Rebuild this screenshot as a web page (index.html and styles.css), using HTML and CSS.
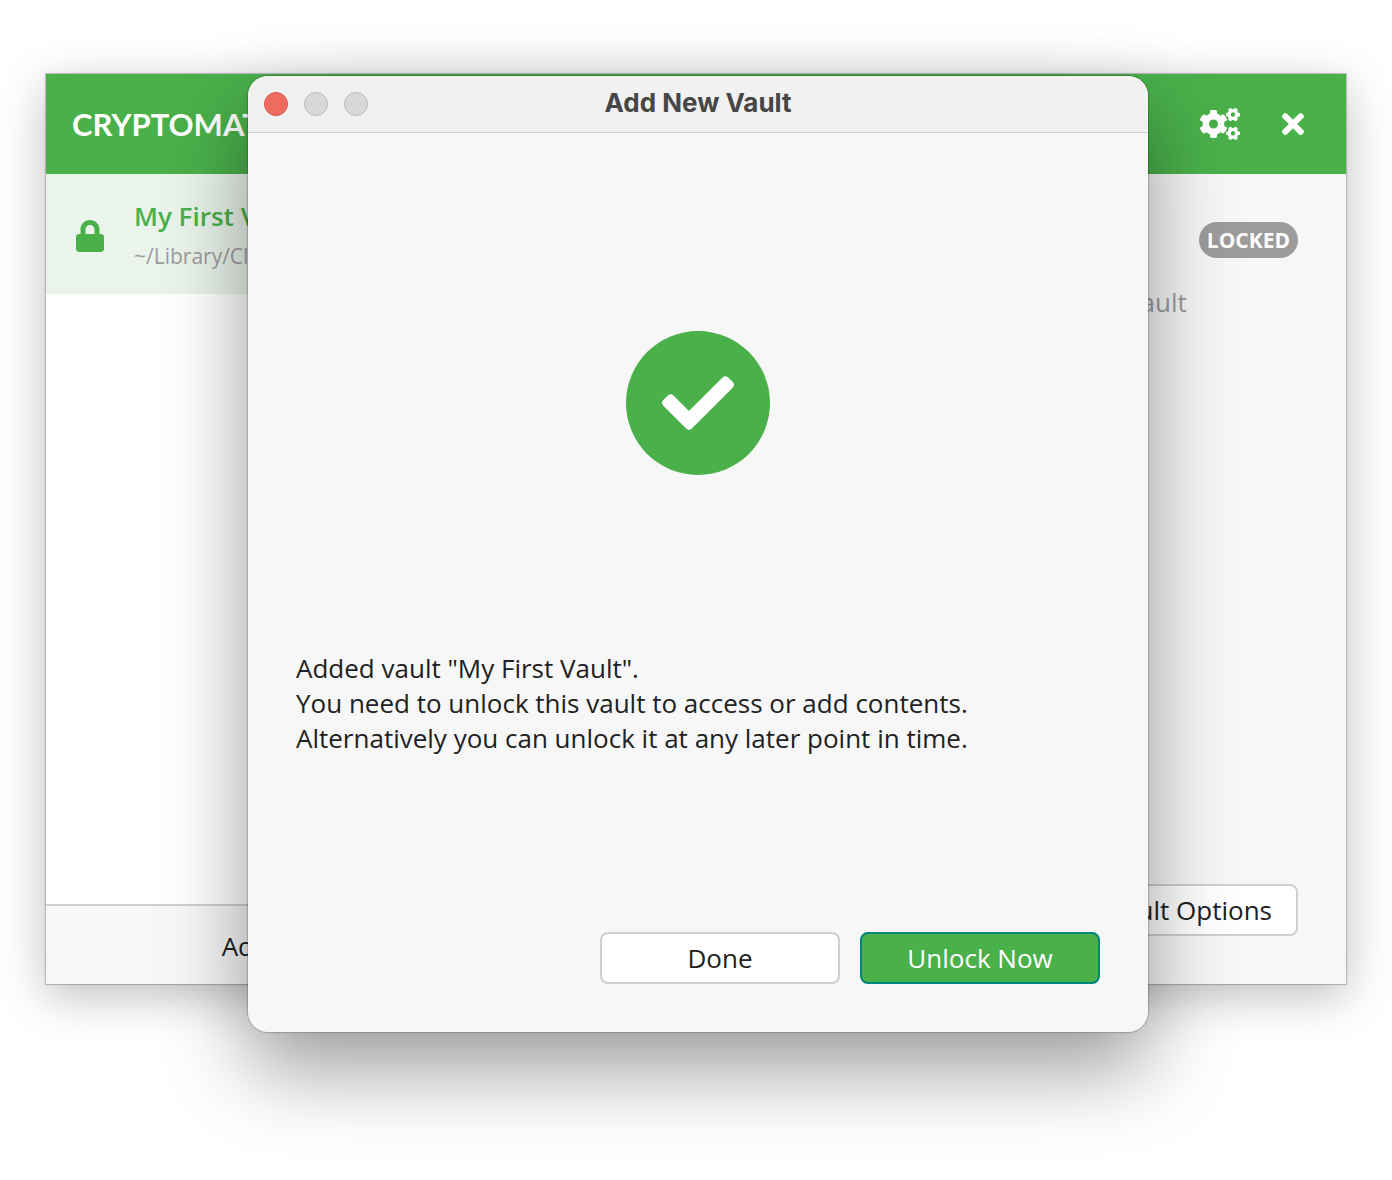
FILE: index.html
```html
<!DOCTYPE html>
<html lang="en">
<head>
<meta charset="utf-8">
<meta name="viewport" content="width=device-width, initial-scale=1">
<title>Cryptomator</title>
<link rel="stylesheet" href="styles.css">
</head>
<body class="desktop">
<main class="window">
  <header class="app-bar">
    <h1 class="brand">CRYPTOMATOR</h1>
    <div class="app-actions">
      <button class="icon-button" type="button" aria-label="Preferences">
        <svg width="40" height="32" viewBox="0 0 640 512" fill="currentColor" aria-hidden="true">
          <defs>
            <path id="small-cog" d="M512.100 191l-8.200 14.300c-3 5.300-9.400 7.500-15.100 5.400-11.800-4.400-22.600-10.700-32.100-18.600-4.600-3.800-5.800-10.500-2.800-15.700l8.200-14.300c-6.900-8-12.300-17.300-15.900-27.400h-16.500c-6 0-11.200-4.300-12.200-10.300-2-12-2.100-24.600 0-37.100 1-6 6.200-10.400 12.200-10.400h16.500c3.600-10.100 9-19.400 15.900-27.400l-8.200-14.300c-3-5.200-1.900-11.900 2.800-15.700 9.500-7.900 20.400-14.200 32.100-18.600 5.700-2.100 12.100.1 15.100 5.400l8.200 14.300c10.500-1.900 21.200-1.900 31.700 0L552 6.300c3-5.300 9.400-7.500 15.100-5.400 11.800 4.400 22.600 10.700 32.100 18.600 4.600 3.800 5.800 10.500 2.800 15.700l-8.200 14.300c6.900 8 12.300 17.300 15.900 27.400h16.500c6 0 11.200 4.300 12.200 10.300 2 12 2.100 24.600 0 37.100-1 6-6.200 10.400-12.200 10.400h-16.500c-3.600 10.100-9 19.400-15.900 27.400l8.200 14.300c3 5.200 1.900 11.900-2.800 15.700-9.500 7.900-20.400 14.200-32.100 18.600-5.700 2.100-12.100-.1-15.100-5.400l-8.200-14.300c-10.400 1.900-21.200 1.900-31.700 0zm-10.500-58.800c38.500 29.600 82.400-14.300 52.800-52.800-38.500-29.700-82.400 14.300-52.800 52.800z"/>
          </defs>
          <use href="#small-cog"/>
          <use href="#small-cog" y="299"/>
          <path d="M386.300 286.100l33.700 16.800c10.100 5.800 14.500 18.100 10.500 29.100-8.900 24.200-26.400 46.400-42.600 65.800-7.400 8.900-20.200 11.100-30.300 5.300l-29.100-16.800c-16 13.700-34.600 24.600-54.900 31.700v33.600c0 11.600-8.300 21.600-19.700 23.600-24.600 4.200-50.400 4.400-75.900 0-11.500-2-20-11.900-20-23.600V418c-20.300-7.200-38.900-18-54.900-31.700L74 403c-10 5.800-22.900 3.600-30.300-5.300-16.200-19.400-33.300-41.600-42.200-65.700-4-10.900.4-23.200 10.500-29.100l33.300-16.800c-3.900-20.900-3.900-42.400 0-63.400L12 205.800c-10.100-5.800-14.600-18.100-10.500-29 8.900-24.200 26-46.400 42.200-65.800 7.400-8.900 20.200-11.100 30.300-5.300l29.100 16.800c16-13.700 34.600-24.600 54.900-31.700V57.100c0-11.500 8.200-21.500 19.600-23.500 24.600-4.200 50.500-4.400 76-.1 11.500 2 20 11.900 20 23.600v33.600c20.300 7.200 38.900 18 54.900 31.700l29.100-16.800c10-5.800 22.900-3.600 30.300 5.300 16.200 19.400 33.200 41.600 42.100 65.800 4 10.900.1 23.200-10 29.100l-33.700 16.800c3.900 21 3.900 42.500 0 63.500zm-117.600 21.100c59.200-77-28.700-164.900-105.700-105.700-59.200 77 28.700 164.900 105.700 105.700z"/>
        </svg>
      </button>
      <button class="icon-button" type="button" aria-label="Close">
        <svg width="22" height="32" viewBox="0 0 352 512" fill="currentColor" aria-hidden="true"><path d="M242.720 256l100.070-100.070c12.280-12.280 12.280-32.190 0-44.480l-22.240-22.240c-12.280-12.280-32.190-12.280-44.480 0L176 189.280 75.930 89.210c-12.280-12.280-32.190-12.280-44.480 0L9.210 111.450c-12.280 12.280-12.280 32.190 0 44.480L109.280 256 9.210 356.070c-12.280 12.280-12.280 32.190 0 44.480l22.240 22.240c12.280 12.280 32.200 12.280 44.480 0L176 322.720l100.070 100.070c12.280 12.280 32.200 12.280 44.480 0l22.240-22.240c12.280-12.280 12.280-32.190 0-44.480L242.720 256z"/></svg>
      </button>
    </div>
  </header>
  <div class="panes">
    <nav class="sidebar">
      <ul class="vault-list">
        <li class="vault">
          <svg class="vault-icon" width="28" height="32" viewBox="0 0 448 512" fill="currentColor" aria-hidden="true"><path d="M400 224h-24v-72C376 68.200 307.800 0 224 0S72 68.200 72 152v72H48c-26.500 0-48 21.500-48 48v192c0 26.500 21.500 48 48 48h352c26.500 0 48-21.500 48-48V272c0-26.500-21.500-48-48-48zm-104 0H152v-72c0-39.700 32.300-72 72-72s72 32.300 72 72v72z"/></svg>
          <div class="vault-text">
            <span class="vault-name">My First Vault</span>
            <span class="vault-path">~/Library/CloudStorage</span>
          </div>
        </li>
      </ul>
      <button class="add-vault" type="button">Add Vault</button>
    </nav>
    <section class="detail">
      <div class="detail-head">
        <span class="badge">LOCKED</span>
        <span class="location">My First Vault</span>
      </div>
      <button class="button options" type="button">Vault Options</button>
    </section>
  </div>
</main>

<section class="dialog" role="dialog" aria-labelledby="dialog-title">
  <header class="title-bar">
    <div class="lights">
      <button class="light light-close" type="button" aria-label="Close window"></button>
      <button class="light" type="button" aria-label="Minimize" disabled></button>
      <button class="light" type="button" aria-label="Zoom" disabled></button>
    </div>
    <h2 class="dialog-title" id="dialog-title">Add New Vault</h2>
  </header>
  <div class="dialog-body">
    <div class="hero">
      <div class="success">
        <svg width="72" height="72" viewBox="0 0 512 512" fill="currentColor" aria-hidden="true"><path d="M173.898 439.404l-166.400-166.400c-9.997-9.997-9.997-26.206 0-36.204l36.203-36.204c9.997-9.998 26.207-9.998 36.204 0L192 312.690 432.095 72.596c9.997-9.997 26.207-9.997 36.204 0l36.203 36.204c9.997 9.997 9.997 26.206 0 36.204l-294.400 294.401c-9.998 9.997-26.207 9.997-36.204-.001z"/></svg>
      </div>
    </div>
    <p class="message">Added vault "My First Vault".<br>You need to unlock this vault to access or add contents.<br>Alternatively you can unlock it at any later point in time.</p>
    <div class="dialog-actions">
      <button class="button" type="button">Done</button>
      <button class="button button-primary" type="button">Unlock Now</button>
    </div>
  </div>
</section>
</body>
</html>
```
FILE: styles.css
```css
:root {
  --green: #4ab04a;
  --surface: #f7f7f7;
  --line: #cfcfcf;
  --ink: #212121;
  --muted: #9c9c9c;
}

* {
  box-sizing: border-box;
}

.desktop {
  position: relative;
  min-height: 100vh;
  margin: 0;
  padding: 74px 46px 196px;
  display: flex;
  overflow: hidden;
  background: #fff;
  color: var(--ink);
  font: 26px/36px "Open Sans", "Noto Sans", sans-serif;
}

button {
  margin: 0;
  padding: 0;
  border: 0;
  background: none;
  color: inherit;
  font: inherit;
}

/* Main window */
.window {
  flex: 1;
  min-width: 0;
  display: flex;
  flex-direction: column;
  background: var(--surface);
  box-shadow: 0 0 1px 1px rgba(0, 0, 0, .2), 0 12px 44px rgba(0, 0, 0, .26);
}

.app-bar {
  height: 100px;
  padding: 0 42px 0 26px;
  display: flex;
  align-items: center;
  justify-content: space-between;
  background: var(--green);
  color: #fff;
}

.brand {
  margin: 0;
  font: 700 31px/40px Lato, "Open Sans", sans-serif;
}

.app-actions {
  display: flex;
  gap: 42px;
}

.icon-button,
.icon-button svg {
  display: block;
}

.panes {
  flex: 1;
  display: flex;
}

.sidebar {
  width: 36%;
  display: flex;
  flex-direction: column;
  background: #fff;
}

.vault-list {
  flex: 1;
  margin: 0;
  padding: 0;
  list-style: none;
}

.vault {
  height: 120px;
  padding: 4px 30px 0;
  display: flex;
  align-items: center;
  gap: 30px;
  background: #eaf4eb;
}

.vault-icon {
  color: var(--green);
}

.vault-text {
  display: flex;
  flex-direction: column;
  gap: 4px;
}

.vault-name {
  color: var(--green);
  font-weight: 600;
}

.vault-path {
  color: var(--muted);
  font-size: 21px;
}

.add-vault {
  height: 80px;
  padding-top: 2px;
  border-top: 2px solid var(--line);
  background: var(--surface);
}

.detail {
  flex: 1;
  padding: 48px;
  display: flex;
  flex-direction: column;
  align-items: flex-end;
  justify-content: space-between;
}

.detail-head {
  display: grid;
  grid-template-columns: 1fr auto;
  gap: 26px 12px;
}

.badge {
  grid-column: 2;
  padding: 0 8px;
  border-radius: 18px;
  background: var(--muted);
  color: #fff;
  font-size: 21px;
  font-weight: 700;
}

.location {
  grid-column: 1;
  color: var(--muted);
}

.button {
  width: 240px;
  height: 52px;
  border: 2px solid var(--line);
  border-radius: 8px;
  background: #fff;
}

.button-primary {
  border-color: #00897b;
  background: var(--green);
  color: #fff;
}

.options {
  width: auto;
  padding: 0 24px;
}

/* Dialog window floating over the main window */
.dialog {
  position: absolute;
  inset: 76px 244px 148px 248px;
  display: flex;
  flex-direction: column;
  overflow: hidden;
  border-radius: 20px;
  background: var(--surface);
  box-shadow: 0 0 1px 1px rgba(0, 0, 0, .2), 0 36px 84px rgba(0, 0, 0, .4);
}

.title-bar {
  height: 57px;
  padding: 0 16px;
  display: grid;
  grid-template-columns: 1fr auto 1fr;
  align-items: center;
  border-bottom: 1px solid #d0d0d0;
  background: #f1f1f1;
}

.lights {
  display: flex;
  gap: 16px;
}

.light {
  width: 24px;
  height: 24px;
  border: 1px solid #b9b9b9;
  border-radius: 50%;
  background: #d8d8d8;
}

.light-close {
  border-color: #d75347;
  background: #ed6b5f;
}

.dialog-title {
  margin: 0;
  padding-bottom: 2px;
  color: #464646;
  font: 700 26px/36px Inter, sans-serif;
}

.dialog-body {
  flex: 1;
  padding: 48px;
  display: flex;
  flex-direction: column;
}

.hero {
  flex: 1;
  display: grid;
  place-items: center;
}

.success {
  width: 144px;
  height: 144px;
  display: grid;
  place-items: center;
  border-radius: 50%;
  background: var(--green);
  color: #fff;
}

.message {
  margin: 27px 0 176px;
  line-height: 35px;
}

.dialog-actions {
  display: flex;
  justify-content: flex-end;
  gap: 20px;
}
```
